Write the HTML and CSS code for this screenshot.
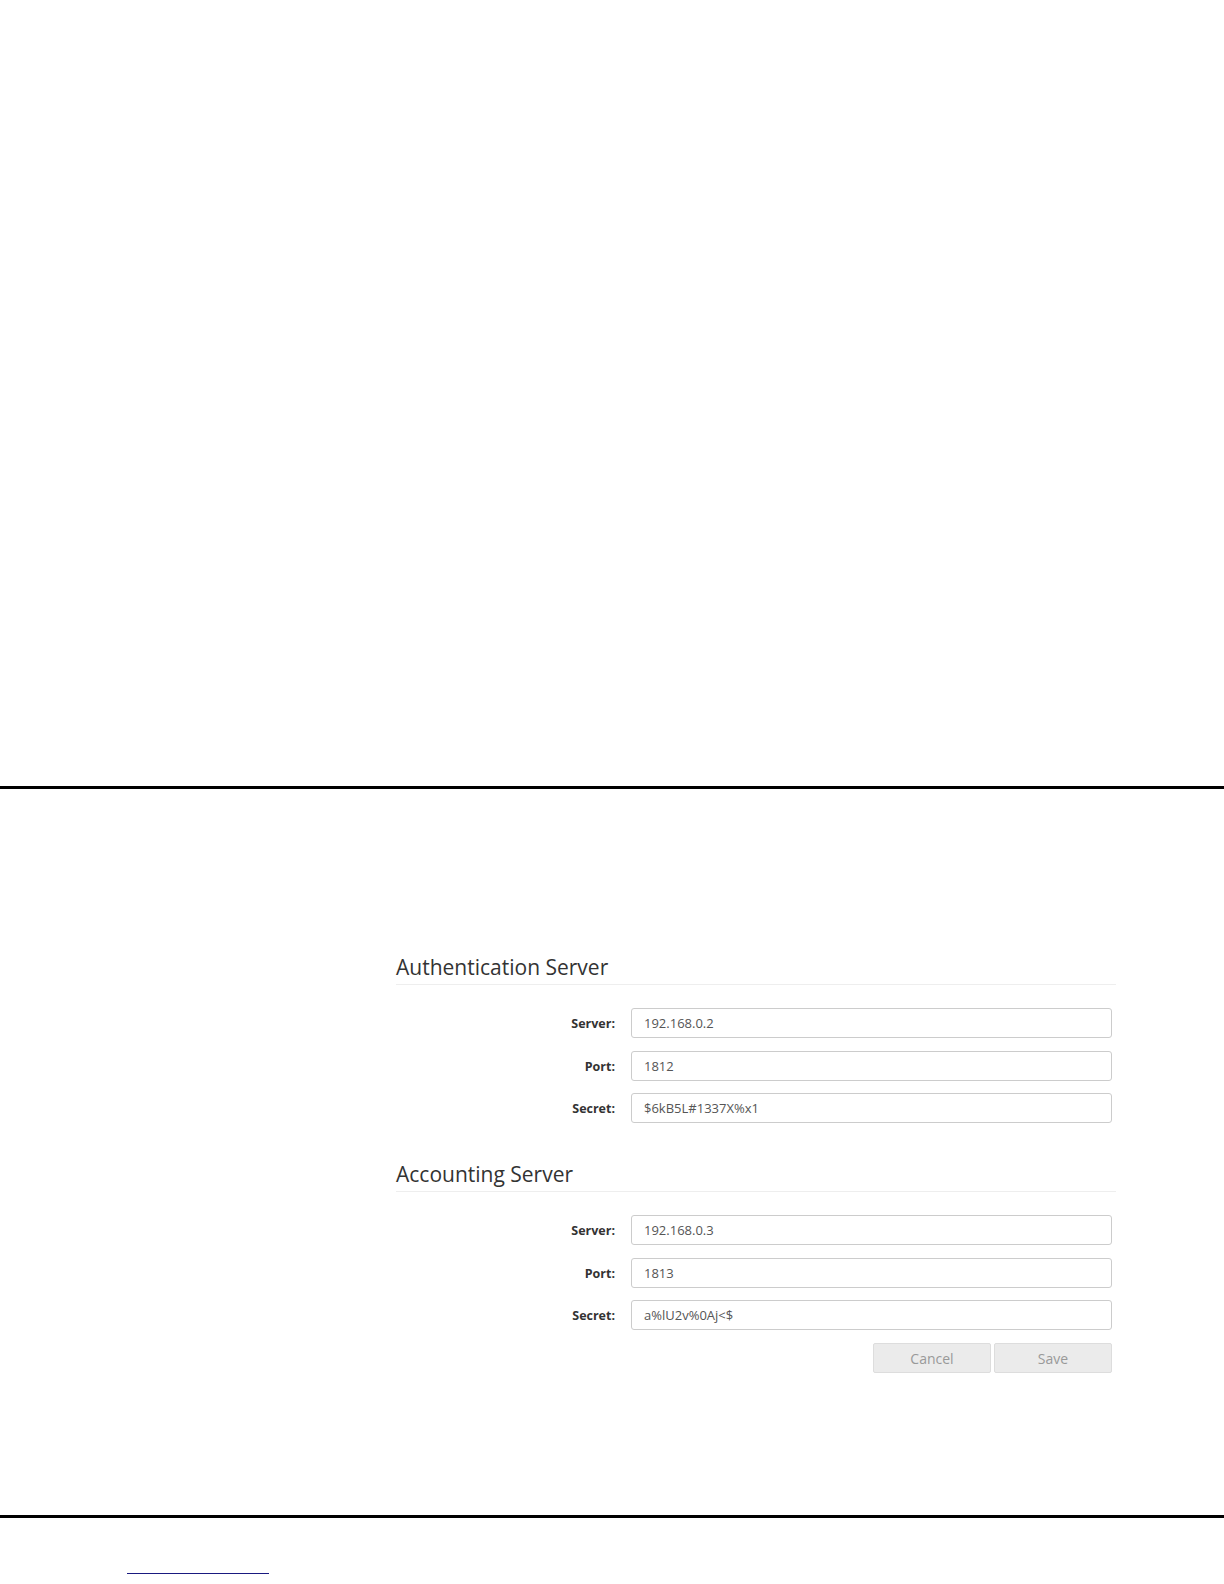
FILE: index.html
```html
<!DOCTYPE html>
<html lang="en">
<head>
<meta charset="utf-8">
<title>RADIUS Servers</title>
<link rel="stylesheet" href="styles.css">
</head>
<body>
<div class="top-space"></div>
<div class="bar"></div>
<main class="main">
  <form class="settings">
    <section class="group">
      <h3 class="group-title">Authentication Server</h3>
      <div class="fields">
        <label class="field-label" for="auth-server">Server:</label>
        <input class="field-input" id="auth-server" type="text" value="192.168.0.2">
        <label class="field-label" for="auth-port">Port:</label>
        <input class="field-input" id="auth-port" type="text" value="1812">
        <label class="field-label" for="auth-secret">Secret:</label>
        <input class="field-input" id="auth-secret" type="text" value="$6kB5L#1337X%x1">
      </div>
    </section>
    <section class="group group-second">
      <h3 class="group-title">Accounting Server</h3>
      <div class="fields">
        <label class="field-label" for="acct-server">Server:</label>
        <input class="field-input" id="acct-server" type="text" value="192.168.0.3">
        <label class="field-label" for="acct-port">Port:</label>
        <input class="field-input" id="acct-port" type="text" value="1813">
        <label class="field-label" for="acct-secret">Secret:</label>
        <input class="field-input" id="acct-secret" type="text" value="a%lU2v%0Aj&lt;$">
      </div>
    </section>
    <div class="actions">
      <button class="btn" type="button" disabled>Cancel</button>
      <button class="btn" type="button" disabled>Save</button>
    </div>
  </form>
</main>
<div class="bar"></div>
<footer class="footer">
  <a class="footer-link" href="#" aria-label="link"></a>
</footer>
</body>
</html>
```
FILE: styles.css
```css
html, body {
  margin: 0;
  padding: 0;
  background: #ffffff;
}

body {
  font-family: "Open Sans", "Liberation Sans", Arial, sans-serif;
  color: #333333;
}

.top-space {
  height: 786px;
}

.bar {
  height: 3px;
  background: #000000;
}

.main {
  padding: 165px 0 142px 396px;
}

.settings {
  width: 720px;
  margin: 0;
}

.group-title {
  margin: 0;
  font-size: 21px;
  line-height: 25px;
  font-weight: 400;
  color: #333333;
  padding-top: 1px;
  padding-bottom: 4px;
  border-bottom: 1px solid #eeeeee;
}

.group-second {
  margin-top: 38px;
}

.fields {
  display: grid;
  grid-template-columns: 219px 481px;
  column-gap: 16px;
  row-gap: 12.5px;
  align-items: center;
  margin-top: 23px;
}

.field-label {
  text-align: right;
  font-size: 12.5px;
  font-weight: 700;
  color: #333333;
  line-height: 18px;
  padding-top: 2px;
}

.field-input {
  box-sizing: border-box;
  height: 30px;
  width: 481px;
  margin: 0;
  padding: 0 12px;
  border: 1px solid #cccccc;
  border-radius: 3px;
  background: #ffffff;
  font-family: "Open Sans", "Liberation Sans", Arial, sans-serif;
  font-size: 13px;
  color: #555555;
  outline: none;
}

.actions {
  display: flex;
  justify-content: flex-end;
  gap: 3px;
  width: 716px;
  margin-top: 13px;
}

.btn {
  box-sizing: border-box;
  width: 118px;
  height: 30px;
  margin: 0;
  padding: 0;
  border: 1px solid #dddddd;
  border-radius: 2px;
  background: #ebebeb;
  font-family: "Open Sans", "Liberation Sans", Arial, sans-serif;
  font-size: 14px;
  color: #999999;
}

.footer {
  padding: 55px 0 8px 127px;
  height: 2px;
}

.footer-link {
  display: block;
  width: 142px;
  height: 0;
  border-bottom: 1px solid #1a1a80;
}
```
